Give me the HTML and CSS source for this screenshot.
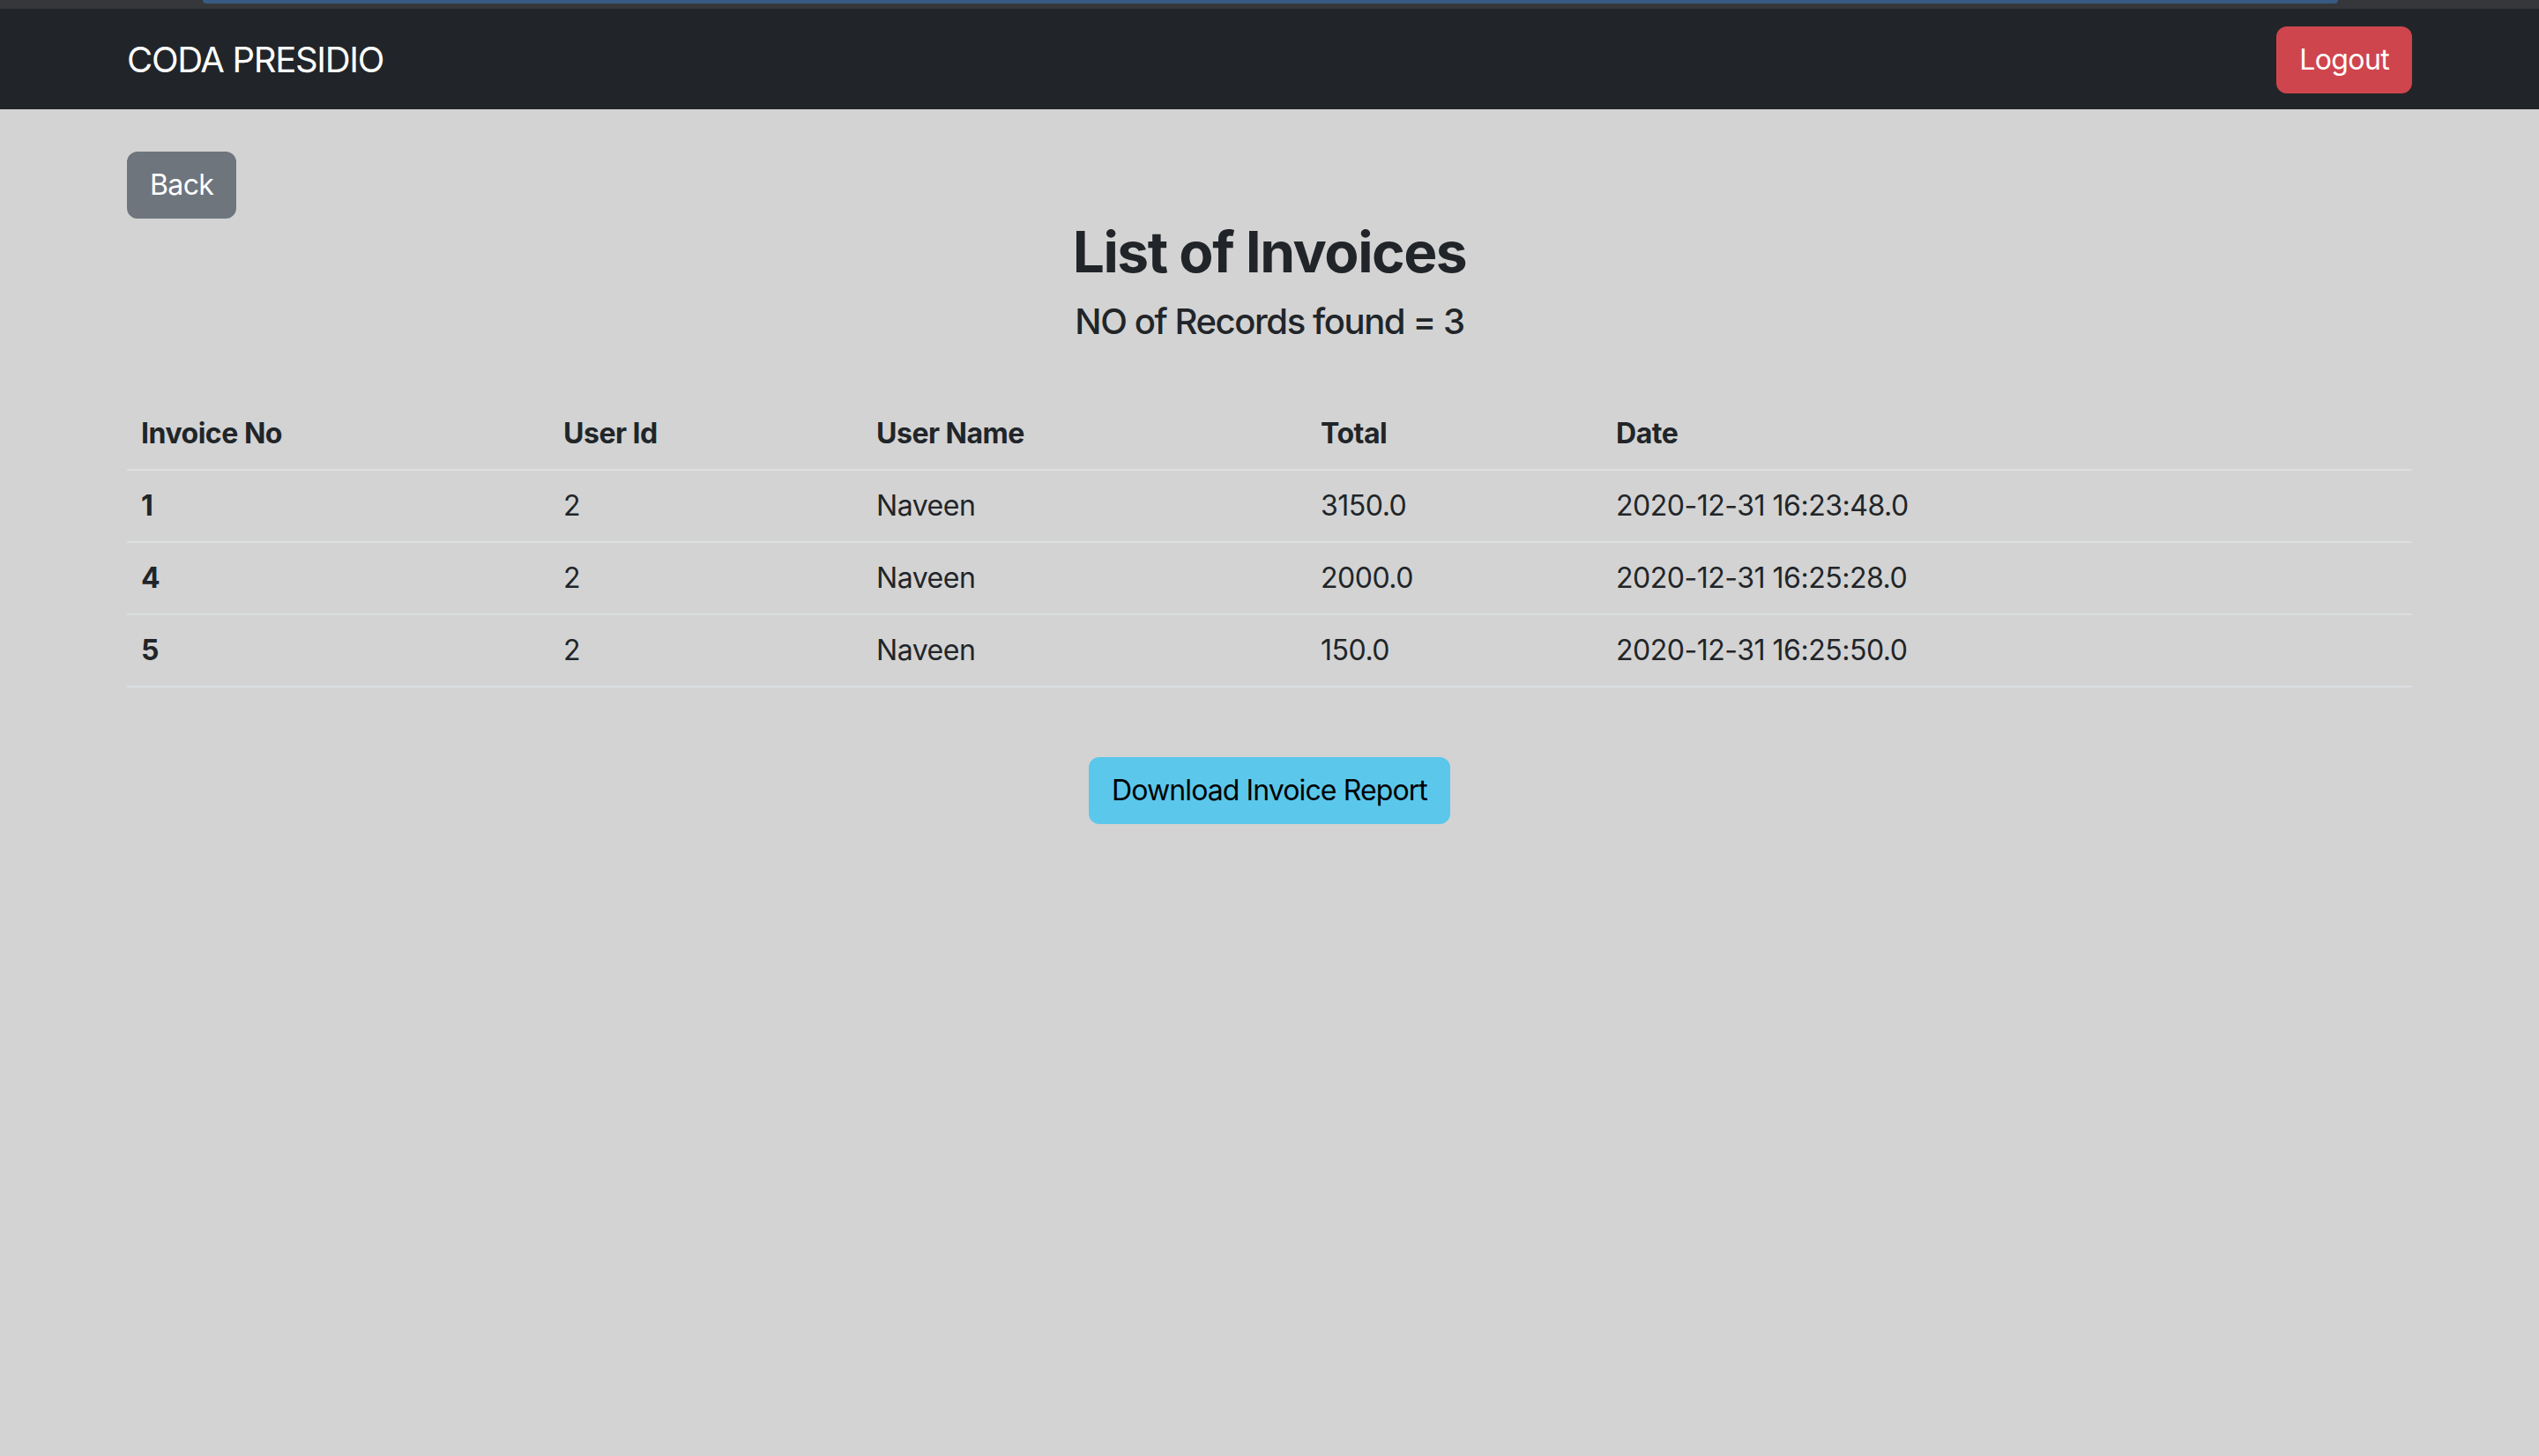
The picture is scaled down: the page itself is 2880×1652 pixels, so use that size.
FILE: index.html
```html
<!DOCTYPE html>
<html lang="en">
<head>
<meta charset="utf-8">
<title>List of Invoices</title>
<link rel="stylesheet" href="styles.css">
</head>
<body>
<div class="topstrip"><div class="tabbar"></div></div>
<nav class="navbar">
  <div class="container nav-inner">
    <a class="brand" href="#">CODA PRESIDIO</a>
    <button class="btn btn-danger">Logout</button>
  </div>
</nav>
<main class="container main">
  <div class="back-row"><button class="btn btn-secondary">Back</button></div>
  <h2 class="title">List of Invoices</h2>
  <h5 class="subtitle">NO of Records found = 3</h5>
  <table class="table">
    <thead>
      <tr>
        <th class="c1">Invoice No</th>
        <th class="c2">User Id</th>
        <th class="c3">User Name</th>
        <th class="c4">Total</th>
        <th class="c5">Date</th>
      </tr>
    </thead>
    <tbody>
      <tr><th>1</th><td>2</td><td>Naveen</td><td>3150.0</td><td>2020-12-31 16:23:48.0</td></tr>
      <tr><th>4</th><td>2</td><td>Naveen</td><td>2000.0</td><td>2020-12-31 16:25:28.0</td></tr>
      <tr><th>5</th><td>2</td><td>Naveen</td><td>150.0</td><td>2020-12-31 16:25:50.0</td></tr>
    </tbody>
  </table>
  <div class="download-row"><button class="btn btn-info">Download Invoice Report</button></div>
</main>
</body>
</html>
```

FILE: styles.css
```css
* { box-sizing: border-box; }
html, body {
  margin: 0;
  padding: 0;
  min-height: 100%;
}
body {
  background: #d3d3d3;
  color: #212529;
  font-family: Inter, "Noto Sans", "Liberation Sans", sans-serif;
  font-size: 32px;
  line-height: 1.5;
  letter-spacing: -0.015em;
  min-height: 1652px;
}
.topstrip {
  height: 10px;
  background: #36373a;
  padding: 0 228px 0 230px;
}
.tabbar {
  height: 4px;
  background: #375b82;
  border-radius: 0 0 10px 10px;
}
.navbar {
  background: #212529;
  height: 114px;
  display: flex;
  align-items: center;
}
.container {
  width: 2592px;
  margin: 0 auto;
}
.nav-inner {
  display: flex;
  align-items: center;
  justify-content: space-between;
  padding-top: 2px;
}
.brand {
  color: #fff;
  text-decoration: none;
  font-size: 40px;
  line-height: 60px;
  padding: 10px 0;
  letter-spacing: -0.033em;
}
.btn {
  font-family: inherit;
  font-size: 32px;
  line-height: 48px;
  padding: 12px 24px;
  border: 2px solid transparent;
  border-radius: 12px;
  cursor: pointer;
  height: 76px;
  letter-spacing: -0.02em;
}
.btn-danger { background: #cf454d; border-color: #cf454d; color: #fff; }
.btn-secondary { background: #6e757d; border-color: #6e757d; color: #fff; }
.btn-info { background: #5bc7eb; border-color: #5bc7eb; color: #000; letter-spacing: -0.028em; }
.main {
  padding-top: 48px;
}
.back-row { display: flex; }
.title {
  margin: 0 0 16px;
  font-size: 64px;
  line-height: 1.2;
  font-weight: 700;
  text-align: center;
  letter-spacing: -0.023em;
}
.subtitle {
  margin: 0 0 63px;
  font-size: 40px;
  line-height: 1.2;
  font-weight: 500;
  text-align: center;
  letter-spacing: -0.035em;
}
.table {
  width: 100%;
  border-collapse: collapse;
  table-layout: fixed;
  margin-bottom: 79px;
}
.table th, .table td {
  padding: 16px;
  text-align: left;
  vertical-align: top;
  border-bottom: 2px solid #dcdfe2;
  line-height: 48px;
}
.table th { font-weight: 700; }
.table td { font-weight: 400; }
.c1 { width: 479px; }
.c2 { width: 355px; }
.c3 { width: 504px; }
.c4 { width: 335px; }
.c5 { width: auto; }
.download-row {
  display: flex;
  justify-content: center;
}
```
